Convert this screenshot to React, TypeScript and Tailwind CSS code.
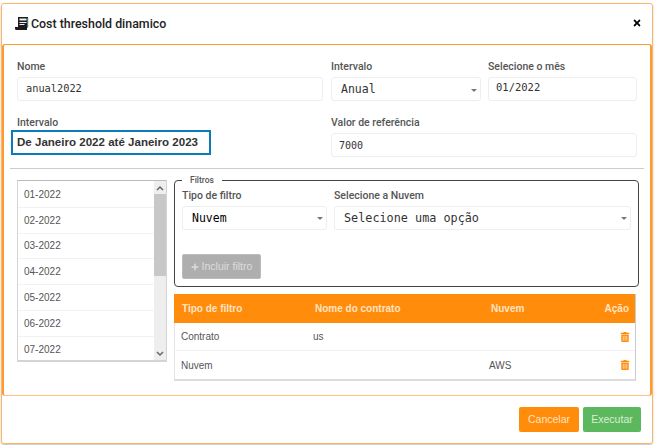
import { FaPlus, FaTimes, FaTrashAlt } from "react-icons/fa";

const label = "block h-[14px] text-[10.5px] leading-[14px] font-medium text-[#555] font-['Roboto',sans-serif]";
const field =
  "flex items-center rounded-[3px] border border-[#eeeeee] bg-white font-['DejaVu_Sans_Mono',monospace] text-[#333]";

const Caret = () => <span className="h-0 w-0 border-x-[3px] border-t-[3px] border-x-transparent border-t-[#777]" />;

const months = ["01-2022", "02-2022", "03-2022", "04-2022", "05-2022", "06-2022", "07-2022"];

const rows = [
  { tipo: "Contrato", nome: "us", nuvem: "" },
  { tipo: "Nuvem", nome: "", nuvem: "AWS" },
];

const App = () => {
  return (
    <div className="h-[445px] w-[656px] overflow-hidden bg-white pl-px pt-[3px] font-['Liberation_Sans',sans-serif]">
      <div className="flex h-[441px] w-[652px] flex-col rounded-[3px] border border-[#ffb566] shadow-[0_1px_2px_rgba(0,0,0,0.25)]">
        <div className="flex h-[40px] shrink-0 items-center justify-between pl-[13px] pr-[10px]">
          <div className="flex items-center gap-[2px]">
            <svg width="14" height="15" viewBox="0 0 14 15" className="shrink-0">
              <path d="M3 1h10v10.500h-1V14H1.500A1.500 1.500 0 0 1 0 12.500V11h3z" fill="#1c1c1c" />
              <path d="M4.500 2.500h7v2h-7zM4.500 6h7v1h-7zM4.500 8h5v1h-5z" fill="#f1f1f1" />
              <path d="M13 2v9" stroke="#7fd7e6" strokeWidth="1" />
            </svg>
            <span className="text-[12.400px] font-medium text-[#222] font-['Roboto',sans-serif]">
              Cost threshold dinamico
            </span>
          </div>
          <FaTimes className="mb-[2px] text-[10px] text-black" />
        </div>

        <div className="flex h-[352px] w-[650px] shrink-0 flex-col rounded-[3px] border border-l-2 border-r-2 border-[#ff9a2e] border-b-[#ffc078] pl-[13px] pt-[15px]">
          <div className="flex">
            <div className="w-[306px] shrink-0">
              <label className={label}>Nome</label>
              <div className={`${field} mt-[3px] h-[24px] pl-[8px] text-[10.300px]`}>anual2022</div>
              <label className={`${label} mt-[15px]`}>Intervalo</label>
              <div className="-ml-[6px] flex h-[25px] w-[200px] items-center border-2 border-[#0b7cb8] pl-[4px] text-[11.550px] font-bold text-[#333]">
                De Janeiro 2022 até Janeiro 2023
              </div>
            </div>
            <div className="ml-[8px] w-[306px] shrink-0">
              <div className="flex gap-[7px]">
                <div className="w-[150px]">
                  <label className={label}>Intervalo</label>
                  <div className={`${field} mt-[3px] h-[24px] justify-between pl-[9px] pr-[3px] pt-[2px] text-[11.500px]`}>
                    <span>Anual</span>
                    <Caret />
                  </div>
                </div>
                <div className="w-[149px]">
                  <label className={label}>Selecione o mês</label>
                  <div className={`${field} mt-[3px] h-[24px] pb-[2px] pl-[7px] text-[10.500px]`}>01/2022</div>
                </div>
              </div>
              <label className={`${label} mt-[15px]`}>Valor de referência</label>
              <div className={`${field} mt-[3px] h-[24px] pl-[7px] text-[10px]`}>7000</div>
            </div>
          </div>

          <div className="-ml-[7px] mt-[11px] h-px w-[634px] bg-[#cccccc]" />

          <div className="mt-[11px] flex items-start gap-[7px]">
            <div className="flex h-[182px] w-[150px] shrink-0 border border-[#d4d4d4] border-b-2 border-t-[#bbbbbb]">
              <div className="min-w-0 flex-1 overflow-hidden pt-px">
                {months.map((m) => (
                  <div
                    key={m}
                    className="flex h-[25.800px] items-center border-b border-[#f2f2f2] pl-[6px] text-[10px] text-[#555]"
                  >
                    {m}
                  </div>
                ))}
              </div>
              <div className="flex w-[12px] shrink-0 flex-col bg-[#eeeeee]">
                <div className="flex h-[13px] items-center justify-center">
                  <svg width="8" height="6" viewBox="0 0 8 6">
                    <path d="M1 5l3-3 3 3" fill="none" stroke="#666" strokeWidth="1.500" />
                  </svg>
                </div>
                <div className="h-[82px] bg-[#c8c8c8]" />
                <div className="mt-auto flex h-[13px] items-center justify-center">
                  <svg width="8" height="6" viewBox="0 0 8 6">
                    <path d="M1 1l3 3 3-3" fill="none" stroke="#666" strokeWidth="1.500" />
                  </svg>
                </div>
              </div>
            </div>

            <div className="w-[462px] shrink-0">
              <fieldset className="-mt-[4px] h-[111px] rounded-[4px] border border-[#444] px-[7px]">
                <legend className="h-[9px] px-[8px] text-[8.500px] leading-[9px] font-medium text-[#555] font-['Roboto',sans-serif]">
                  Filtros
                </legend>
                <div className="mt-[4px] flex gap-[7px]">
                  <div className="w-[145px]">
                    <label className={label}>Tipo de filtro</label>
                    <div className={`${field} mt-[3px] h-[24px] justify-between pl-[9px] pr-[3px] pt-px text-[11.500px] text-black`}>
                      <span>Nuvem</span>
                      <Caret />
                    </div>
                  </div>
                  <div className="w-[297px]">
                    <label className={label}>Selecione a Nuvem</label>
                    <div className={`${field} mt-[3px] h-[24px] justify-between pl-[9px] pr-[3px] pt-px text-[11.800px]`}>
                      <span>Selecione uma opção</span>
                      <Caret />
                    </div>
                  </div>
                </div>
                <button className="mt-[24px] flex h-[25px] w-[79px] items-center justify-center gap-[3px] rounded-[2px] border border-[#bbbbbb] bg-[#aeaeae] text-[10.500px] text-[#dddddd]">
                  <FaPlus className="text-[8px]" />
                  Incluir filtro
                </button>
              </fieldset>

              <div className="mt-[7px] border-b-2 border-r border-[#dddddd] border-r-[#cccccc]">
                <div className="flex h-[29px] items-center bg-[#ff8c0a] pl-[8px] pr-[6px] text-[10px] font-bold text-[#ffe3c4]">
                  <span className="w-[133px]">Tipo de filtro</span>
                  <span className="w-[176px]">Nome do contrato</span>
                  <span className="flex-1">Nuvem</span>
                  <span>Ação</span>
                </div>
                {rows.map((r) => (
                  <div
                    key={r.tipo}
                    className="flex h-[28px] items-center border-b border-[#f0f0f0] border-l border-l-[#e4e4e4] pl-[6px] pr-[5px] text-[10px] text-[#555] last:border-b-0"
                  >
                    <span className="w-[132px]">{r.tipo}</span>
                    <span className="w-[176px]">{r.nome}</span>
                    <span className="flex-1">{r.nuvem}</span>
                    <FaTrashAlt className="text-[10px] text-[#ff8c0a]" />
                  </div>
                ))}
              </div>
            </div>
          </div>
        </div>

        <div className="flex flex-1 items-start justify-end gap-[4px] pr-[11px] pt-[11px]">
          <button className="h-[25px] w-[60px] rounded-[2px] bg-[#ff8c0a] text-[10.500px] text-[#ffe3c4]">Cancelar</button>
          <button className="h-[25px] w-[58px] rounded-[2px] bg-[#5cb85c] text-[10.500px] text-[#d8efd8]">Executar</button>
        </div>
      </div>
    </div>
  );
};

export default App;
